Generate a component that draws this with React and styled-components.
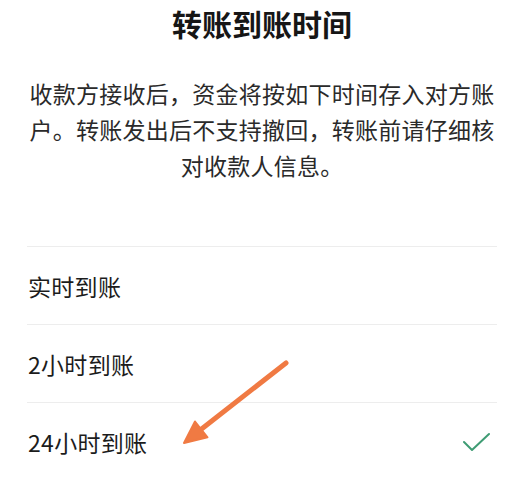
import React from "react";
import styled, { createGlobalStyle } from "styled-components";

const GlobalStyle = createGlobalStyle`
  html, body {
    margin: 0;
    padding: 0;
    background: #fff;
  }
  body {
    font-family: "Noto Sans CJK SC", "Noto Sans", sans-serif;
  }
`;

const Page = styled.div`
  position: relative;
  width: 520px;
  height: 479px;
  overflow: hidden;
  background: #fff;
`;

const Title = styled.h1`
  margin: 0;
  padding-top: 3px;
  font-size: 30px;
  line-height: 40px;
  font-weight: 700;
  color: #161616;
  text-align: center;
  padding-left: 4px;
`;

const Desc = styled.p`
  margin: 32px 0 0;
  padding: 0 21px 0 25px;
  font-size: 23px;
  line-height: 36px;
  letter-spacing: 0.25px;
  color: #2a2a2a;
  text-align: center;
`;

const OptionList = styled.ul`
  list-style: none;
  margin: 63px 23px 0 27px;
  padding: 0;
`;

const Option = styled.li`
  display: flex;
  align-items: center;
  justify-content: space-between;
  height: 77px;
  padding: 0 7px 0 1px;
  border-top: 1px solid #ededed;
  font-size: 23px;
  color: #1c1c1c;
  letter-spacing: 0.3px;
`;

const Check = () => (
  <svg width="27" height="20" viewBox="0 0 27 20">
    <polyline
      points="1,10 9,18 26,2"
      fill="none"
      stroke="#3f9c74"
      strokeWidth="2"
      strokeLinecap="round"
      strokeLinejoin="round"
    />
  </svg>
);

const ArrowLayer = styled.svg`
  position: absolute;
  left: 0;
  top: 0;
  pointer-events: none;
`;

const options = [
  { label: "实时到账", selected: false },
  { label: "2小时到账", selected: false },
  { label: "24小时到账", selected: true },
];

export default function App() {
  return (
    <Page>
      <GlobalStyle />
      <Title>转账到账时间</Title>
      <Desc>
        收款方接收后，资金将按如下时间存入对方账户。转账发出后不支持撤回，转账前请仔细核对收款人信息。
      </Desc>
      <OptionList>
        {options.map((o) => (
          <Option key={o.label}>
            <span>{o.label}</span>
            {o.selected && <Check />}
          </Option>
        ))}
      </OptionList>
      <ArrowLayer width="520" height="479" viewBox="0 0 520 479">
        <line
          x1="286"
          y1="363"
          x2="199"
          y2="431"
          stroke="#f07a43"
          strokeWidth="5"
          strokeLinecap="round"
        />
        <polygon
          points="184,443 195,421.5 207.5,437.3"
          fill="#f07a43"
          stroke="#f07a43"
          strokeWidth="2"
          strokeLinejoin="round"
        />
      </ArrowLayer>
    </Page>
  );
}
